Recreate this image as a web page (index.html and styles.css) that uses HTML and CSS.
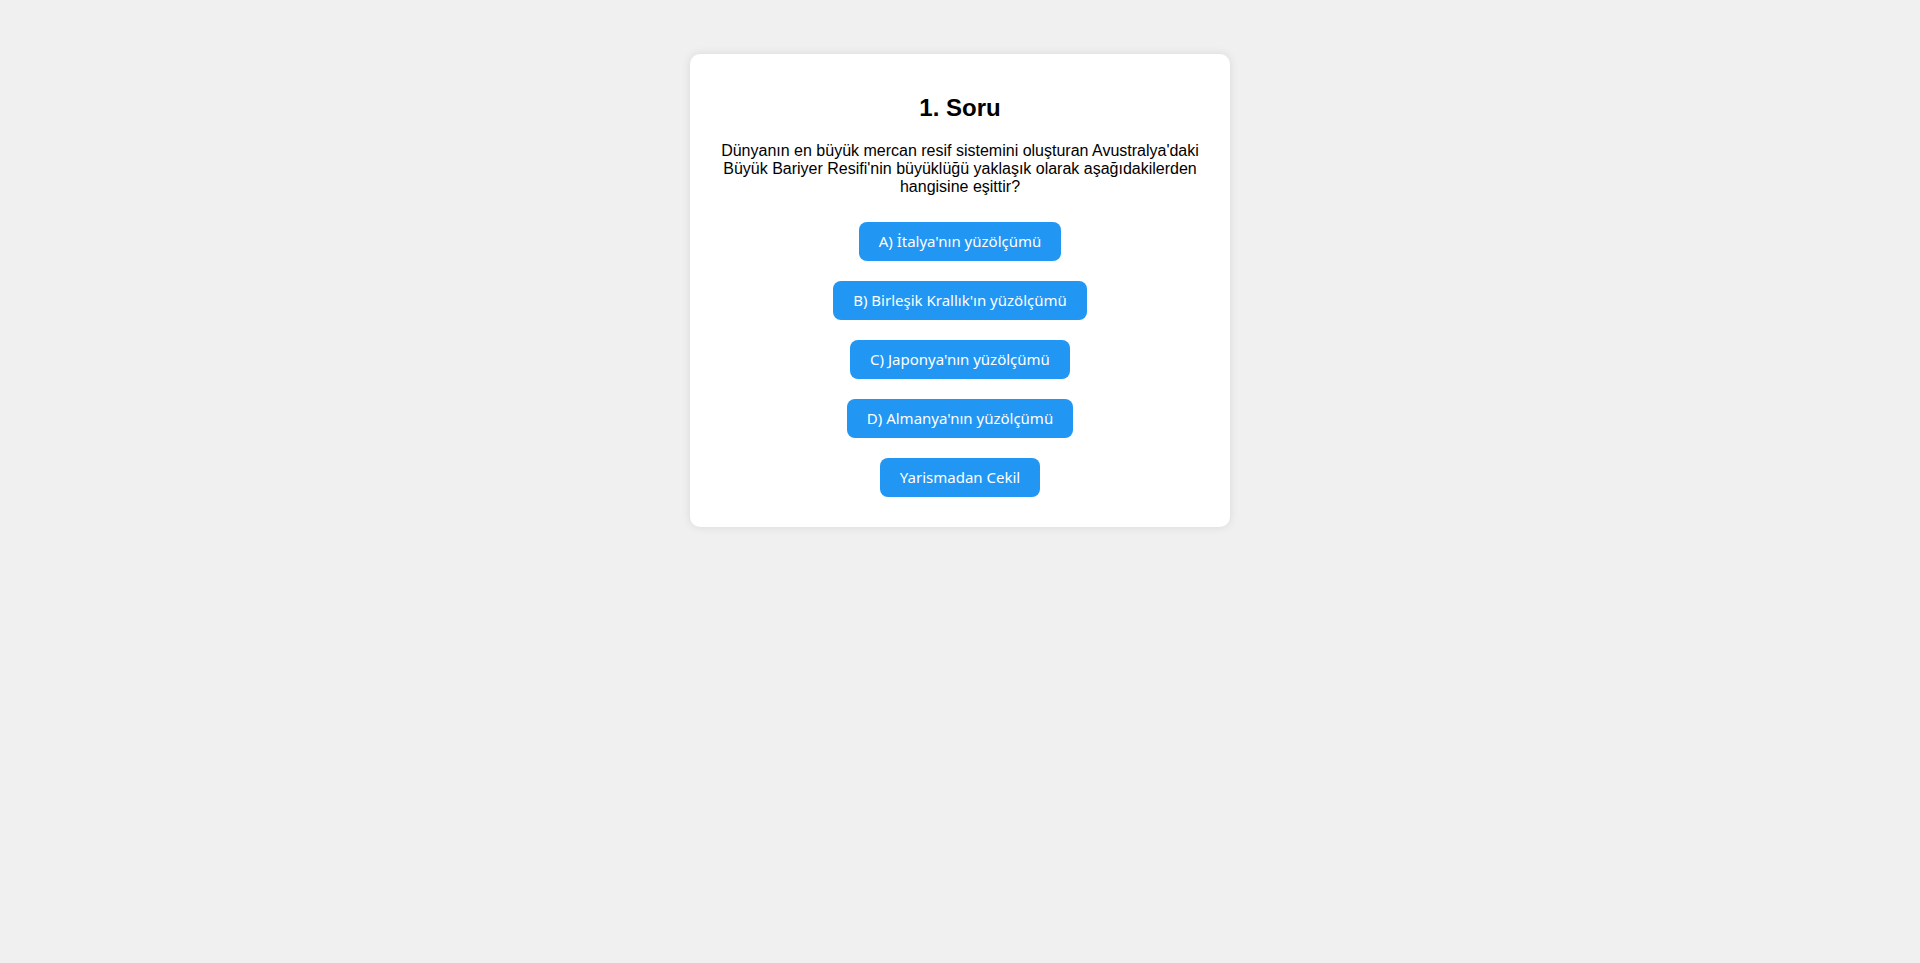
FILE: index.html
```html
<!DOCTYPE html>
<html lang="tr">
<head>
    <meta charset="UTF-8">
    <meta name="viewport" content="width=device-width, initial-scale=1.0">
    <title>1. Soru</title>
    <link rel="stylesheet" href="styles.css">
</head>
<body>
    <div class="container">
        <h2>1. Soru</h2>
        <p>Dünyanın en büyük mercan resif sistemini oluşturan Avustralya'daki Büyük Bariyer Resifi'nin büyüklüğü yaklaşık olarak aşağıdakilerden hangisine eşittir?</p>

        <div class="options">
            <button type="button" class="option">A) İtalya'nın yüzölçümü</button>
            <button type="button" class="option">B) Birleşik Krallık'ın yüzölçümü</button>
            <button type="button" class="option">C) Japonya'nın yüzölçümü</button>
            <button type="button" class="option">D) Almanya'nın yüzölçümü</button>
            <button type="button" class="option">Yarismadan Cekil</button>
        </div>
    </div>
</body>
</html>
```
FILE: styles.css
```css
body {
    font-family: "Liberation Sans", Arial, sans-serif;
    background-color: #f0f0f0;
    color: #000;
    margin: 0;
    padding: 0;
}

.container {
    max-width: 480px;
    margin: 54px auto;
    padding: 20px 30px 30px;
    background-color: #fff;
    border-radius: 10px;
    box-shadow: 0 0 10px rgba(0, 0, 0, 0.1);
    text-align: center;
}

h2 {
    font-size: 24px;
    line-height: 28px;
    margin: 20px 0;
}

p {
    font-size: 16px;
    line-height: 18px;
    margin: 20px 0 26px;
}

.options {
    display: flex;
    flex-direction: column;
    align-items: center;
    gap: 20px;
}

.option {
    font-family: Tahoma, "Noto Sans", sans-serif;
    font-size: 15px;
    line-height: 19px;
    padding: 10px 20px;
    border: none;
    border-radius: 8px;
    background-color: #2196f3;
    color: #fff;
    cursor: pointer;
}
```
